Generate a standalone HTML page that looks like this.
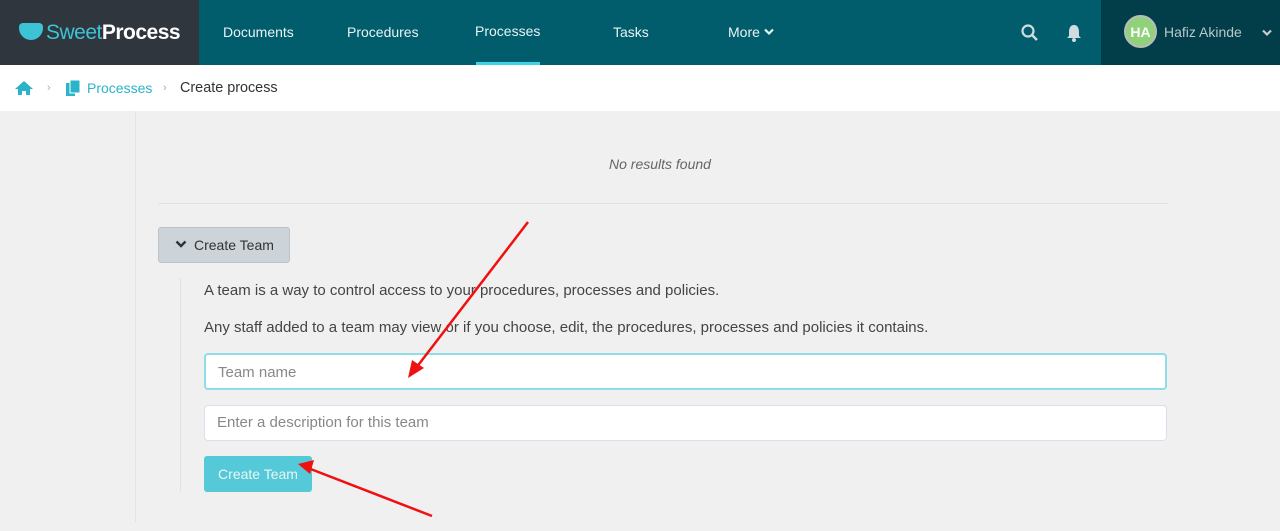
<!DOCTYPE html>
<html><head><style>
*{box-sizing:border-box;margin:0;padding:0}
body{width:1280px;height:531px;overflow:hidden;background:#f0f0f0;font-family:"Liberation Sans",sans-serif;position:relative}
.top{position:absolute;left:0;top:0;width:1280px;height:65px;background:#015c6b}
.logo{position:absolute;left:0;top:0;width:199px;height:65px;background:#30363d;color:#fff;font-size:21px;line-height:65px;padding-left:46px;letter-spacing:-0.5px}
.logo .s{color:#3cc3d6}
.logo .ic{position:absolute;left:19px;top:23px;width:24px;height:17px;background:#3cc3d6;border-radius:4px 4px 12px 12px}
.nav{position:absolute;top:0;color:#e8f3f5;font-size:14px;line-height:65px}
.ul{position:absolute;left:476px;top:62px;width:64px;height:3px;background:#3fd3e8}
.user{position:absolute;left:1101px;top:0;width:179px;height:65px;background:#013e49}
.av{position:absolute;left:23px;top:15px;width:33px;height:33px;border-radius:50%;background:#8fd27a;color:#fff;font-size:14px;font-weight:bold;line-height:30px;text-align:center;border:2px solid #bbb}
.crumb{position:absolute;left:0;top:65px;width:1280px;height:46px;background:#fff;font-size:14px;line-height:46px}
.panel{position:absolute;left:135px;top:111px;width:1150px;height:411px;border-left:1px solid #e0e5e8}
.inp{position:absolute;left:204px;width:963px;background:#fff;border:1px solid #dde;border-radius:4px;font-size:15px;color:#888;padding-left:12px}
</style></head><body>
<div class="top"></div>
<div class="logo"><div class="ic"></div><span class="s">Sweet</span><b>Process</b></div>
<div class="nav" style="left:223px">Documents</div>
<div class="nav" style="left:347px">Procedures</div>
<div class="nav" style="left:475px;line-height:62px">Processes</div>
<div class="nav" style="left:613px">Tasks</div>
<div class="nav" style="left:728px">More <svg width="10" height="8" style="vertical-align:1px"><path d="M1 1.5 5 5.5 9 1.5" fill="none" stroke="#e8f3f5" stroke-width="2.2"/></svg></div>
<div class="ul"></div>
<svg style="position:absolute;left:1021px;top:24px" width="18" height="18"><circle cx="7" cy="7" r="5.5" fill="none" stroke="#d0dde0" stroke-width="2.2"/><line x1="11" y1="11" x2="16" y2="16" stroke="#d0dde0" stroke-width="2.5"/></svg>
<svg style="position:absolute;left:1066px;top:24px" width="16" height="18"><path d="M8 1C4 1 3 5 3 8L3 12 1 14 15 14 13 12 13 8C13 5 12 1 8 1Z" fill="#d0dde0"/><circle cx="8" cy="16" r="2" fill="#d0dde0"/></svg>
<div class="user"><div class="av">HA</div><span style="position:absolute;left:63px;top:0;line-height:65px;color:#b7c7ca;font-size:14px">Hafiz Akinde</span><svg style="position:absolute;left:161px;top:29px" width="10" height="8"><path d="M1 1.5 5 5.5 9 1.5" fill="none" stroke="#ccc" stroke-width="2.2"/></svg></div>
<div class="crumb">
<svg style="position:absolute;left:15px;top:16px" width="18" height="14"><path d="M9 0 0 8 3 8 3 14 7 14 7 10 11 10 11 14 15 14 15 8 18 8Z" fill="#2bb3c9"/></svg>
<span style="position:absolute;left:47px;color:#aaa;font-size:11px">›</span>
<svg style="position:absolute;left:66px;top:15px" width="14" height="16"><rect x="0" y="3" width="9" height="13" fill="#2bb3c9"/><rect x="4" y="0" width="10" height="13" fill="#2bb3c9" stroke="#fff"/></svg>
<span style="position:absolute;left:87px;color:#2bb3c9">Processes</span>
<span style="position:absolute;left:163px;color:#aaa;font-size:11px">›</span>
<span style="position:absolute;left:180px;color:#333;font-size:14.4px">Create process</span>
</div>
<div class="panel"></div>
<div style="position:absolute;left:609px;top:156px;font-size:14px;font-style:italic;color:#666">No results found</div>
<div style="position:absolute;left:158px;top:203px;width:1010px;height:1px;background:#e2e2e2"></div>
<div style="position:absolute;left:158px;top:227px;width:132px;height:36px;background:#ccd3d9;border:1px solid #bcc4ca;border-radius:3px;font-size:14px;color:#333;line-height:34px;padding-left:16px"><svg width="12" height="9" style="margin-right:7px;vertical-align:1px"><path d="M1.5 1.5 6 6 10.5 1.5" fill="none" stroke="#333" stroke-width="2.4"/></svg>Create Team</div>
<div style="position:absolute;left:180px;top:278px;width:1px;height:214px;background:#e2e2e2"></div>
<div style="position:absolute;left:204px;top:282px;font-size:15px;color:#444">A team is a way to control access to your procedures, processes and policies.</div>
<div style="position:absolute;left:204px;top:319px;font-size:15px;color:#444">Any staff added to a team may view or if you choose, edit, the procedures, processes and policies it contains.</div>
<div class="inp" style="top:353px;height:37px;line-height:35px;border:2px solid #8fdde8">Team name</div>
<div class="inp" style="top:405px;height:36px;line-height:34px">Enter a description for this team</div>
<div style="position:absolute;left:204px;top:456px;width:108px;height:36px;background:#55c9d7;border-radius:3px;color:#e8f8fa;font-size:14px;line-height:36px;text-align:center">Create Team</div>
<svg style="position:absolute;left:0;top:0" width="1280" height="531">
<line x1="528" y1="222" x2="416" y2="368" stroke="#f01010" stroke-width="2.5"/>
<polygon points="408,378 412,360 424,368" fill="#f01010"/>
<line x1="432" y1="516" x2="308" y2="468" stroke="#f01010" stroke-width="2.5"/>
<polygon points="298,464 314,460 310,474" fill="#f01010"/>
</svg>
</body></html>
